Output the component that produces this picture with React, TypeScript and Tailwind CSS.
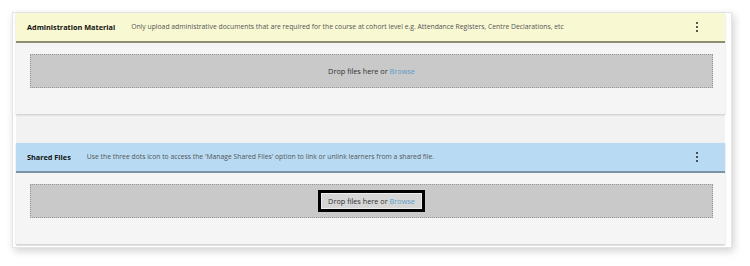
const font = { fontFamily: '"Open Sans", "Noto Sans", sans-serif' };

function Kebab() {
  return (
    <span className="flex flex-col items-center gap-[1.5px]">
      <span className="w-[2.5px] h-[2.5px] rounded-full bg-[#222]" />
      <span className="w-[2.5px] h-[2.5px] rounded-full bg-[#222]" />
      <span className="w-[2.5px] h-[2.5px] rounded-full bg-[#222]" />
    </span>
  );
}

function DropZone({ focused }: { focused?: boolean }) {
  return (
    <div className="mx-[14px] mr-[12px] h-[34px] bg-[#c9c9c9] border border-dotted border-[#999] flex items-center justify-center">
      <span
        className={`text-[7.3px] text-[#333] ${
          focused ? 'border-[3px] border-black bg-[#d6d6d6] px-[7px] py-[3px] outline outline-1 outline-[#eee] -outline-offset-[4px]' : ''
        }`}
      >
        Drop files here or <span className="text-[#5a9cc8]">Browse</span>
      </span>
    </div>
  );
}

function Section({
  title,
  note,
  header,
  focused,
}: {
  title: string;
  note: string;
  header: string;
  focused?: boolean;
}) {
  return (
    <div className="bg-[#f5f5f5] shadow-[0_1px_2px_rgba(0,0,0,0.18)] pb-[26px]">
      <div className={`h-[30px] flex items-center pl-[11px] pr-[27px] border-b-2 ${header}`}>
        <span className="text-[7.3px] font-bold text-[#111]">{title}</span>
        <span className="ml-4 text-[6.8px] text-[#555] flex-1">{note}</span>
        <Kebab />
      </div>
      <div className="pt-[11px]">
        <DropZone focused={focused} />
      </div>
    </div>
  );
}

export default function App() {
  return (
    <div className="w-[750px] h-[266px] bg-white pt-3 pl-3" style={font}>
      <div className="w-[720px] h-[236px] bg-white border border-[#e4e4e4] shadow-[2px_3px_8px_rgba(0,0,0,0.18)] pl-[3px] pr-[6px] pb-[1px]">
        <div className="h-full bg-[#f2f2f2] flex flex-col gap-[29px]">
          <Section
            title="Administration Material"
            note="Only upload administrative documents that are required for the course at cohort level e.g. Attendance Registers, Centre Declarations, etc"
            header="bg-[#f8f8d3] border-[#8d8d76]"
          />
          <Section
            title="Shared Files"
            note="Use the three dots icon to access the 'Manage Shared Files' option to link or unlink learners from a shared file."
            header="bg-[#b8dbf3] border-[#7a93a8]"
            focused
          />
        </div>
      </div>
    </div>
  );
}
